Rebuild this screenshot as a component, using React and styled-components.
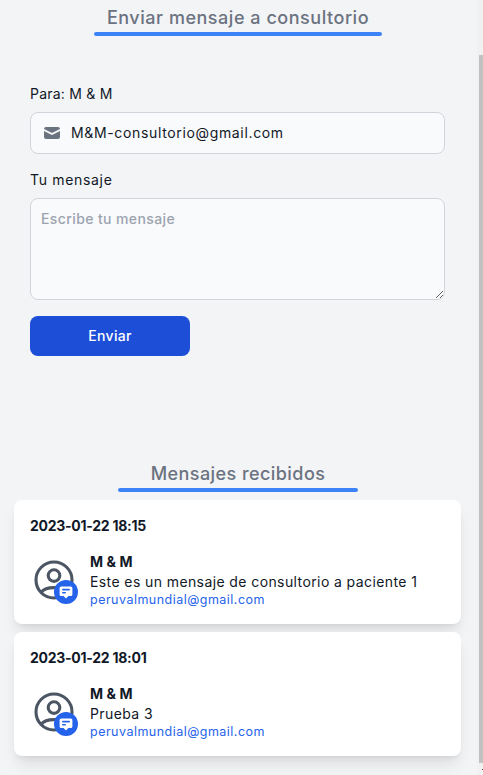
import React from 'react';
import styled, { createGlobalStyle } from 'styled-components';

const GlobalStyle = createGlobalStyle`
  *, *::before, *::after { box-sizing: border-box; }
  body {
    margin: 0;
    background: #f3f4f6;
    color: #111827;
    font-family: Inter, "Open Sans", sans-serif;
    font-size: 14px;
    line-height: 20px;
    overflow: hidden;
  }
`;

const Page = styled.div`
  display: flex;
  width: 483px;
  height: 775px;
  overflow: hidden;
`;

const Content = styled.main`
  flex: 0 0 477px;
  display: flex;
  flex-direction: column;
  padding: 4px 0 0 14px;
`;

const ScrollTrack = styled.div`
  flex: 0 0 6px;
  display: flex;
  flex-direction: column;
  align-items: flex-end;
  background: #f1f1f1;
  padding-top: 55px;
`;

const ScrollThumb = styled.div`
  width: 4px;
  height: 708px;
  background: #c1c1c1;
`;

const ScrollArrow = styled.div`
  width: 1px;
  height: 1px;
  margin-top: 6px;
  background: #505050;
`;

const Heading = styled.h2`
  width: ${(p) => p.$width}px;
  height: 32px;
  margin: 0 0 0 ${(p) => p.$indent}px;
  display: flex;
  flex-direction: column;
  align-items: center;
  justify-content: space-between;
  font-size: 18px;
  font-weight: 500;
  line-height: 28px;
  letter-spacing: ${(p) => p.$track}px;
  color: #6b7280;
  white-space: nowrap;
  &::after {
    content: "";
    flex: 0 0 4px;
    width: 100%;
    border-radius: 2px;
    background: #3b82f6;
  }
`;

const Form = styled.form`
  width: 415px;
  margin: 48px 0 104px 16px;
`;

const Label = styled.label`
  display: block;
  margin-bottom: 8px;
  letter-spacing: ${(p) => p.$track}px;
`;

const Field = styled.div`
  display: flex;
  align-items: center;
  height: 42px;
  margin-bottom: 16px;
  padding-left: 11px;
  border: 1px solid #d1d5db;
  border-radius: 8px;
  background: #f9fafb;
  svg { width: 20px; height: 20px; fill: #6b7280; }
`;

const Address = styled.span`
  margin-left: 9px;
  letter-spacing: 0.65px;
`;

const MessageBox = styled.textarea`
  display: block;
  width: 100%;
  height: 102px;
  margin: 0 0 16px;
  padding: 10px;
  border: 1px solid #d1d5db;
  border-radius: 8px;
  background: #f9fafb;
  font: 500 14px/20px Inter, sans-serif;
  letter-spacing: 0.39px;
  resize: vertical;
  &::placeholder { color: #9ca3af; opacity: 1; }
`;

const SendButton = styled.button`
  display: block;
  width: 160px;
  height: 40px;
  padding: 0;
  border: 0;
  border-radius: 8px;
  background: #1d4ed8;
  color: #fff;
  font: 500 14px/20px Inter, sans-serif;
  letter-spacing: 0.35px;
`;

const Inbox = styled.div`
  display: flex;
  flex-direction: column;
  gap: 8px;
  width: 447px;
  margin-top: 8px;
`;

const Card = styled.article`
  height: 124px;
  padding: 16px;
  border-radius: 8px;
  background: #fff;
  box-shadow: 0 10px 15px -3px rgba(0, 0, 0, 0.1), 0 4px 6px -4px rgba(0, 0, 0, 0.1);
`;

const Stamp = styled.time`
  display: block;
  margin-bottom: 16px;
  font-weight: 700;
  letter-spacing: -0.26px;
`;

const CardBody = styled.div`
  display: flex;
  align-items: center;
  gap: 12px;
`;

const Avatar = styled.div`
  position: relative;
  width: 48px;
  height: 48px;
  > svg { display: block; }
`;

const Badge = styled.span`
  position: absolute;
  right: 0;
  bottom: 0;
  display: grid;
  place-items: center;
  width: 24px;
  height: 24px;
  border-radius: 50%;
  background: #2563eb;
`;

const Details = styled.div`
  display: flex;
  flex-direction: column;
`;

const Sender = styled.strong`
  font-weight: 700;
  letter-spacing: 0.1px;
`;

const Body = styled.span`
  letter-spacing: 0.4px;
  white-space: nowrap;
`;

const Email = styled.span`
  color: #2563eb;
  font-size: 12.5px;
  line-height: 16px;
  letter-spacing: 0.48px;
`;

const messages = [
  { date: '2023-01-22 18:15', text: 'Este es un mensaje de consultorio a paciente 1' },
  { date: '2023-01-22 18:01', text: 'Prueba 3' },
];

function UserIcon() {
  return (
    <svg width="48" height="48" viewBox="0 0 48 48" fill="none" stroke="#4b5563" strokeWidth="3.1">
      <circle cx="24" cy="24" r="18" />
      <circle cx="24" cy="19.6" r="5.8" />
      <path d="M11.2 36.2C13.5 33.2 18 31.6 24 31.6S34.5 33.2 36.8 36.2" />
    </svg>
  );
}

function ChatIcon() {
  return (
    <svg width="16" height="16" viewBox="0 0 20 20" fill="#fff">
      <path
        fillRule="evenodd"
        clipRule="evenodd"
        d="M18 13V5a2 2 0 00-2-2H4a2 2 0 00-2 2v8a2 2 0 002 2h3l3 3 3-3h3a2 2 0 002-2zM5 7a1 1 0 011-1h8a1 1 0 110 2H6a1 1 0 01-1-1zm1 3a1 1 0 100 2h3a1 1 0 100-2H6z"
      />
    </svg>
  );
}

export default function App() {
  return (
    <>
      <GlobalStyle />
      <Page>
        <Content>
          <Heading $width={288} $indent={80} $track={0.53}>Enviar mensaje a consultorio</Heading>
          <Form>
            <Label $track={0.23}>Para: M &amp; M</Label>
            <Field>
              <svg viewBox="0 0 20 20">
                <path d="M2.003 5.884L10 9.882l7.997-3.998A2 2 0 0016 4H4a2 2 0 00-1.997 1.884z" />
                <path d="M18 8.118l-8 4-8-4V14a2 2 0 002 2h12a2 2 0 002-2V8.118z" />
              </svg>
              <Address>M&amp;M-consultorio@gmail.com</Address>
            </Field>
            <Label htmlFor="message" $track={0.68}>Tu mensaje</Label>
            <MessageBox id="message" placeholder="Escribe tu mensaje" />
            <SendButton type="button">Enviar</SendButton>
          </Form>
          <Heading $width={240} $indent={104} $track={0.44}>Mensajes recibidos</Heading>
          <Inbox>
            {messages.map((m) => (
              <Card key={m.date}>
                <Stamp>{m.date}</Stamp>
                <CardBody>
                  <Avatar>
                    <UserIcon />
                    <Badge><ChatIcon /></Badge>
                  </Avatar>
                  <Details>
                    <Sender>M &amp; M</Sender>
                    <Body>{m.text}</Body>
                    <Email>peruvalmundial@gmail.com</Email>
                  </Details>
                </CardBody>
              </Card>
            ))}
          </Inbox>
        </Content>
        <ScrollTrack>
          <ScrollThumb />
          <ScrollArrow />
        </ScrollTrack>
      </Page>
    </>
  );
}
